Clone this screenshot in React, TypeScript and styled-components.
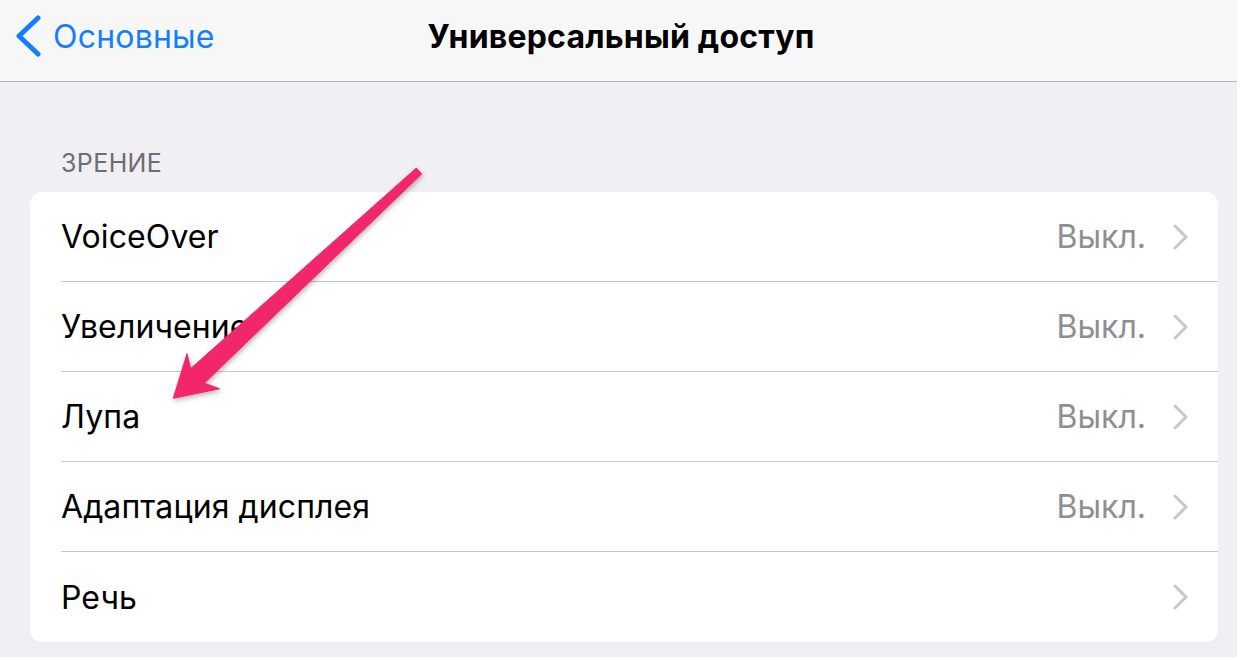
import React from "react";
import styled, { createGlobalStyle } from "styled-components";

const GlobalStyle = createGlobalStyle`
  html, body {
    margin: 0;
    padding: 0;
    background: #ffffff;
  }
  body {
    font-family: Inter, "Noto Sans", "Liberation Sans", sans-serif;
    -webkit-font-smoothing: antialiased;
  }
`;

const Frame = styled.div`
  position: relative;
  width: 1240px;
  height: 660px;
  padding: 0 3px 3px 0;
  box-sizing: border-box;
  background: #ffffff;
  overflow: hidden;
`;

const Screen = styled.div`
  display: flex;
  flex-direction: column;
  height: 100%;
  background: #efeff4;
`;

const NavBar = styled.header`
  position: relative;
  display: flex;
  align-items: center;
  justify-content: center;
  height: 82px;
  padding-bottom: 9px;
  box-sizing: border-box;
  flex-shrink: 0;
  background: #f7f7f8;
  border-bottom: 1px solid #b2b2b6;
`;

const BackButton = styled.div`
  position: absolute;
  left: 15px;
  top: 0;
  bottom: 9px;
  display: flex;
  align-items: center;
  gap: 12px;
  color: #157efb;
  font-size: 32px;
  letter-spacing: 0.2px;
`;

const Title = styled.h1`
  margin: 0 0 0 5px;
  font-size: 32px;
  font-weight: 700;
  color: #000;
  letter-spacing: 0.2px;
`;

const Content = styled.main`
  display: flex;
  flex-direction: column;
  padding: 65px 19px 0 30px;
`;

const SectionHeader = styled.div`
  padding-left: 31px;
  height: 45px;
  font-size: 25px;
  color: #6d6d72;
  letter-spacing: 0.4px;
  line-height: 32px;
`;

const Card = styled.section`
  display: flex;
  flex-direction: column;
  background: #fff;
  border-radius: 12px;
  overflow: hidden;
`;

const Row = styled.div`
  display: flex;
  height: 90px;
  padding-left: 31px;
  box-sizing: border-box;
`;

const RowInner = styled.div<{ $last?: boolean }>`
  flex: 1;
  display: flex;
  align-items: center;
  padding-right: 30px;
  border-bottom: ${(p) => (p.$last ? "none" : "1px solid #c8c7cc")};
`;

const Label = styled.span`
  flex: 1;
  font-size: 32px;
  color: #000;
  letter-spacing: 0.1px;
`;

const Value = styled.span`
  font-size: 32px;
  color: #8e8e93;
  margin-right: 26px;
`;

const Overlay = styled.svg`
  position: absolute;
  left: 0;
  top: 0;
  pointer-events: none;
`;

const BackChevron = () => (
  <svg width="26" height="42" viewBox="0 0 26 42">
    <polyline
      points="23,3 4,21 23,39"
      fill="none"
      stroke="#157efb"
      strokeWidth="5"
      strokeLinecap="round"
      strokeLinejoin="round"
    />
  </svg>
);

const Disclosure = () => (
  <svg width="16" height="26" viewBox="0 0 16 26">
    <polyline
      points="3,2 14,13 3,24"
      fill="none"
      stroke="#c7c7cc"
      strokeWidth="3"
      strokeLinecap="round"
      strokeLinejoin="round"
    />
  </svg>
);

const rows = [
  { label: "VoiceOver", value: "Выкл." },
  { label: "Увеличение", value: "Выкл." },
  { label: "Лупа", value: "Выкл." },
  { label: "Адаптация дисплея", value: "Выкл." },
  { label: "Речь", value: "" },
];

export default function App() {
  return (
    <>
      <GlobalStyle />
      <Frame>
        <Screen>
          <NavBar>
            <BackButton>
              <BackChevron />
              <span>Основные</span>
            </BackButton>
            <Title>Универсальный доступ</Title>
          </NavBar>
          <Content>
            <SectionHeader>ЗРЕНИЕ</SectionHeader>
            <Card>
              {rows.map((r, i) => (
                <Row key={r.label}>
                  <RowInner $last={i === rows.length - 1}>
                    <Label>{r.label}</Label>
                    {r.value && <Value>{r.value}</Value>}
                    <Disclosure />
                  </RowInner>
                </Row>
              ))}
            </Card>
          </Content>
        </Screen>
        <Overlay width="1240" height="660" viewBox="0 0 1240 660">
          <defs>
            <filter id="arrowShadow" x="-20%" y="-20%" width="140%" height="140%">
              <feDropShadow dx="1" dy="2" stdDeviation="2.5" floodColor="#000" floodOpacity="0.3" />
            </filter>
          </defs>
          {/* pink annotation arrow pointing at "Лупа" */}
          <polygon
            points="416.3,168.1 190.7,368.6 187,353.6 173.3,398.3 219.6,388.8 204.3,383.2 421.7,173.9"
            fill="#f2276b"
            stroke="#f2276b"
            strokeWidth="1"
            strokeLinejoin="round"
            filter="url(#arrowShadow)"
          />
        </Overlay>
      </Frame>
    </>
  );
}
